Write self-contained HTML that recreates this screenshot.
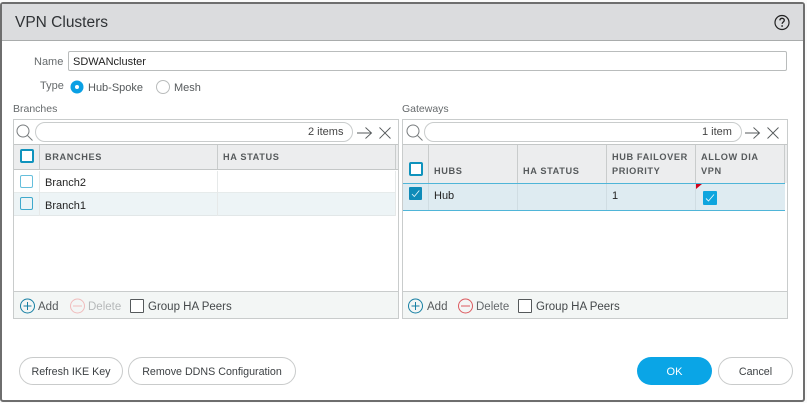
<!DOCTYPE html>
<html><head><meta charset="utf-8"><style>
html,body{margin:0;padding:0;width:807px;height:403px;overflow:hidden;background:#fafafa}
body{font-family:"Liberation Sans",sans-serif;color:#333;position:relative}
.a{position:absolute;box-sizing:border-box}
.t{position:absolute;white-space:nowrap;font-size:11px;line-height:14px;color:#333}
.f{font-size:11.5px}
.th{position:absolute;white-space:nowrap;font-size:9.2px;line-height:14px;font-weight:bold;letter-spacing:.62px;color:#565a5c}
.b{background:#c9cccc}
.cb{position:absolute;box-sizing:border-box;width:14px;height:14px;border:2px solid #1b9cc4;border-radius:2px;background:#fff}
.btn{position:absolute;box-sizing:border-box;height:28px;border:1px solid #c9cbcb;border-radius:14px;background:#fff;text-align:center;font-size:10.7px;line-height:28px;color:#3d4144}
svg{position:absolute;left:0;top:0}
</style></head><body>
<div class="a" style="left:0;top:2px;width:805px;height:400px;background:#fff;border:2px solid #6e6e6e;border-bottom-width:2px;border-radius:3px"></div>
<div class="a" style="left:2px;top:4px;width:801px;height:37px;background:#dbdcde;border-bottom:1px solid #a9acac"></div>
<div class="t" style="left:15px;top:13px;font-size:15.5px;line-height:19px;color:#2f3235">VPN Clusters</div>

<div class="t" style="left:34px;top:55px;color:#666a6c">Name</div>
<div class="a" style="left:68px;top:51px;width:719px;height:20px;border:1px solid #b9bcbc;border-radius:2px;background:#fff"></div>
<div class="t" style="left:73px;top:55px;color:#222">SDWANcluster</div>
<div class="t" style="left:40px;top:79px;color:#666a6c">Type</div>
<div class="t" style="left:88px;top:81px;color:#55595b">Hub-Spoke</div>
<div class="t" style="left:174px;top:81px;color:#55595b">Mesh</div>
<div class="t" style="left:13px;top:102px;font-size:10.5px;color:#666a6c">Branches</div>
<div class="t" style="left:402px;top:102px;font-size:10.5px;color:#666a6c">Gateways</div>

<!-- Left grid -->
<div class="a" style="left:13px;top:119px;width:386px;height:200px;border:1px solid #c9cccc;background:#fff"></div>
<div class="a" style="left:14px;top:144px;width:384px;height:26px;background:#ecedee;border-top:1px solid #c4c7c7;border-bottom:1px solid #c4c7c7"></div>
<div class="a" style="left:14px;top:193px;width:382px;height:23px;background:#edf4f6;border-bottom:1px solid #e2e7e8"></div>
<div class="a" style="left:14px;top:192px;width:382px;height:1px;background:#e6ebeb"></div>
<div class="a b" style="left:39px;top:145px;width:1px;height:24px"></div>
<div class="a b" style="left:217px;top:145px;width:1px;height:24px"></div>
<div class="a b" style="left:395px;top:145px;width:1px;height:24px"></div>
<div class="a" style="left:39px;top:171px;width:1px;height:45px;background:#e6e9e9"></div>
<div class="a" style="left:217px;top:171px;width:1px;height:45px;background:#e6e9e9"></div>
<div class="a" style="left:395px;top:171px;width:1px;height:45px;background:#e6e9e9"></div>
<div class="a" style="left:14px;top:291px;width:384px;height:27px;background:#f3f6f5;border-top:1px solid #c9cccc"></div>
<div class="a" style="left:35px;top:122px;width:318px;height:20px;border:1px solid #c9cccc;border-radius:10px;background:#fff"></div>
<div class="t" style="left:308px;top:125px;color:#444">2 items</div>
<div class="th" style="left:45px;top:150px">BRANCHES</div>
<div class="th" style="left:223px;top:150px">HA STATUS</div>
<div class="cb" style="left:20px;top:149px;border-color:#0f93bd"></div>
<div class="cb" style="left:20px;top:175px;width:13px;height:13px;border-width:1.5px;border-color:#66bfdc"></div>
<div class="cb" style="left:20px;top:197px;width:13px;height:13px;border-width:1.5px;border-color:#3fa9cc;background:transparent"></div>
<div class="t" style="left:45px;top:176px;color:#222">Branch2</div>
<div class="t" style="left:45px;top:199px;color:#222">Branch1</div>
<div class="t f" style="left:38px;top:300px;color:#55595b">Add</div>
<div class="t f" style="left:88px;top:300px;color:#b5b8b9">Delete</div>
<div class="a" style="left:130px;top:299px;width:14px;height:14px;border:1px solid #55595b;border-radius:1px;background:#fff"></div>
<div class="t f" style="left:148px;top:300px;color:#44484a">Group HA Peers</div>

<!-- Right grid -->
<div class="a" style="left:402px;top:119px;width:386px;height:200px;border:1px solid #c9cccc;background:#fff"></div>
<div class="a" style="left:403px;top:144px;width:384px;height:39px;background:#ecedee;border-top:1px solid #c4c7c7"></div>
<div class="a" style="left:403px;top:183px;width:382px;height:28px;background:#deebf1;border-top:1px solid #4fb5d8;border-bottom:1px solid #4fb5d8"></div>
<div class="a b" style="left:428px;top:145px;width:1px;height:38px"></div>
<div class="a b" style="left:517px;top:145px;width:1px;height:38px"></div>
<div class="a b" style="left:606px;top:145px;width:1px;height:38px"></div>
<div class="a b" style="left:695px;top:145px;width:1px;height:38px"></div>
<div class="a b" style="left:784px;top:145px;width:1px;height:38px"></div>
<div class="a" style="left:428px;top:184px;width:1px;height:26px;background:#d0dde3"></div>
<div class="a" style="left:517px;top:184px;width:1px;height:26px;background:#d0dde3"></div>
<div class="a" style="left:606px;top:184px;width:1px;height:26px;background:#d0dde3"></div>
<div class="a" style="left:695px;top:184px;width:1px;height:26px;background:#d0dde3"></div>
<div class="a" style="left:403px;top:291px;width:384px;height:27px;background:#f3f6f5;border-top:1px solid #c9cccc"></div>
<div class="a" style="left:424px;top:122px;width:318px;height:20px;border:1px solid #c9cccc;border-radius:10px;background:#fff"></div>
<div class="t" style="left:702px;top:125px;color:#444">1 item</div>
<div class="th" style="left:434px;top:164px">HUBS</div>
<div class="th" style="left:523px;top:164px">HA STATUS</div>
<div class="th" style="left:612px;top:150px">HUB FAILOVER</div>
<div class="th" style="left:612px;top:164px">PRIORITY</div>
<div class="th" style="left:701px;top:150px">ALLOW DIA</div>
<div class="th" style="left:701px;top:164px">VPN</div>
<div class="cb" style="left:409px;top:162px;border-color:#0f93bd"></div>
<div class="t" style="left:434px;top:189px;color:#222">Hub</div>
<div class="t" style="left:612px;top:189px;color:#222">1</div>
<div class="t f" style="left:427px;top:300px;color:#55595b">Add</div>
<div class="t f" style="left:476px;top:300px;color:#63676a">Delete</div>
<div class="a" style="left:518px;top:299px;width:14px;height:14px;border:1px solid #55595b;border-radius:1px;background:#fff"></div>
<div class="t f" style="left:536px;top:300px;color:#44484a">Group HA Peers</div>

<!-- Buttons -->
<div class="btn" style="left:19px;top:357px;width:104px">Refresh IKE Key</div>
<div class="btn" style="left:128px;top:357px;width:168px">Remove DDNS Configuration</div>
<div class="btn" style="left:637px;top:357px;width:75px;border:0;background:#0aa5e6;color:#fff;line-height:30px;font-size:11px">OK</div>
<div class="btn" style="left:718px;top:357px;width:75px">Cancel</div>

<svg width="807" height="403" viewBox="0 0 807 403" fill="none">
<!-- help -->
<circle cx="782" cy="22.5" r="7" stroke="#222" stroke-width="1.2"/>
<path d="M779.8 20.4c.2-1.4 1.2-2.1 2.3-2.1 1.3 0 2.2.9 2.2 2 0 1.7-2.2 1.7-2.2 3.6" stroke="#222" stroke-width="1.3"/>
<circle cx="782.1" cy="26" r=".9" fill="#222"/>
<!-- radios -->
<circle cx="77" cy="87" r="6.5" fill="#0aa0e4"/><circle cx="77" cy="87" r="2" fill="#fff"/>
<circle cx="163" cy="87" r="6.5" fill="#fff" stroke="#b9bcbc"/>
<!-- left toolbar -->
<circle cx="23" cy="131" r="6" stroke="#777b7d" stroke-width="1"/><path d="M27.5 135.5l5 5" stroke="#777b7d"/>
<path d="M357 133h14M365.500 127.500l6 5.500-6 5.500" stroke="#55595b" stroke-width=".9"/>
<path d="M379.500 127.500l11 11M390.500 127.500l-11 11" stroke="#55595b" stroke-width=".9"/>
<!-- right toolbar -->
<circle cx="413" cy="131" r="6" stroke="#777b7d" stroke-width="1"/><path d="M417.500 135.500l5 5" stroke="#777b7d"/>
<path d="M745 133h14M753.500 127.500l6 5.500-6 5.500" stroke="#55595b" stroke-width=".9"/>
<path d="M767.500 127.500l11 11M778.500 127.500l-11 11" stroke="#55595b" stroke-width=".9"/>
<!-- checked -->
<rect x="409" y="187" width="13" height="13" rx="1" fill="#0f8bb8"/>
<path d="M412 194l2.300 2.500 5-6" stroke="#dff3fa" stroke-width=".9"/>
<rect x="703" y="191" width="14" height="14" rx="1" fill="#0ea5de"/>
<path d="M706 198.500l2.500 2.500 5.500-6.500" stroke="#e6f6fc" stroke-width=".9"/>
<path d="M696 184h6l-6 5z" fill="#d0021b"/>
<!-- footer icons -->
<circle cx="27.500" cy="306" r="7" stroke="#167fa3" stroke-width="1"/><path d="M27.500 302v8M23.500 306h8" stroke="#167fa3"/>
<circle cx="77.500" cy="306" r="7" stroke="#f0bcbc" stroke-width="1"/><path d="M73 306h9" stroke="#f0bcbc"/>
<circle cx="415.500" cy="306" r="7" stroke="#167fa3" stroke-width="1"/><path d="M415.500 302v8M411.500 306h8" stroke="#167fa3"/>
<circle cx="465.500" cy="306" r="7" stroke="#dc5a5f" stroke-width="1"/><path d="M461 306h9" stroke="#dc5a5f"/>
</svg>
</body></html>
